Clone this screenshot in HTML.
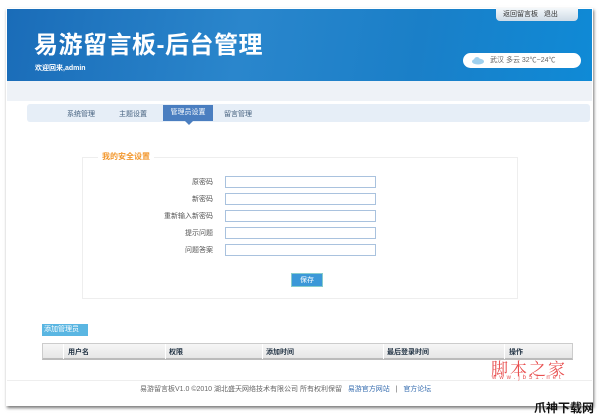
<!DOCTYPE html>
<html><head><meta charset="utf-8"><style>
*{margin:0;padding:0;box-sizing:border-box}
body{width:600px;height:412px;background:#fff;position:relative;overflow:hidden;font-family:"Liberation Sans","Noto Sans CJK SC",sans-serif;font-size:7px;color:#555}
.a{position:absolute}
.page{left:6px;top:8px;width:587px;height:398px;background:#fff;box-shadow:1px 2px 3px #777}
.hdr{left:7px;top:9px;width:585px;height:72px;background:linear-gradient(100deg,#1a6cb8 0%,#2a86cc 40%,#1a7fc8 70%,#0f8ad6 100%)}
.band{left:7px;top:81px;width:585px;height:20px;background:#eef2f7}
.title{left:34px;top:25px;font-size:24px;font-weight:bold;color:#fff;letter-spacing:0.5px}
.welcome{left:35px;top:63px;font-size:7px;font-weight:bold;color:#fff}
.topb{left:496px;top:8px;width:82px;height:13px;background:linear-gradient(#f4f8fb,#cfdbe6);border-radius:0 0 4px 4px;font-size:7px;color:#333;padding-left:7px;line-height:13px}
.wx{left:463px;top:53px;width:118px;height:15px;background:#fff;border-radius:8px;font-size:7px;color:#666;line-height:15px;padding-left:27px}
.nav{left:27px;top:104px;width:563px;height:18px;background:#e6eef7;border-radius:3px}
.tab{top:109px;font-size:7px;color:#44607e}
.act{left:163px;top:105px;width:50px;height:16px;background:#4a7ec0;color:#fff;text-align:center;line-height:16px;font-size:7px}
.arr{left:185px;top:121px;border:4px solid transparent;border-top-color:#4a7ec0;border-bottom:0}
.fs{left:82px;top:157px;width:436px;height:142px;border:1px solid #eee}
.lg{left:98px;top:151px;background:#fff;padding:0 4px;font-size:8px;font-weight:bold;color:#f2962b}
.lbl{width:120px;left:93px;text-align:right;font-size:7px;color:#555}
.inp{left:225px;width:151px;height:12px;border:1px solid #a9c2de}
.save{left:291px;top:273px;width:32px;height:14px;background:#3b98d8;color:#fff;font-size:7px;text-align:center;line-height:14px;border:1px solid #8cc}
.add{left:42px;top:324px;width:46px;height:12px;background:#5ab6e2;color:#fff;font-size:7px;line-height:12px;padding-left:2px}
.tbl{left:42px;top:343px;width:531px;height:17px;background:linear-gradient(#f6f6f6,#e6e6e6);border:1px solid #ccc;border-bottom:2px solid #bbb}
.th{top:347px;font-size:7px;font-weight:bold;color:#234}
.sep{top:344px;width:1px;height:15px;background:#fff}
.foot{left:7px;top:380px;width:585px;height:1px;background:#eee}
.ft{left:140px;top:384px;font-size:7px;color:#666}
.ft b{font-weight:normal;color:#3a6fb0}
</style></head><body>
<div class="a page"></div>
<div class="a hdr"></div>
<div class="a band"></div>
<div class="a title">易游留言板-后台管理</div>
<div class="a welcome">欢迎回来,admin</div>
<div class="a topb">返回留言板&nbsp;&nbsp;&nbsp;退出</div>
<div class="a wx">武汉 多云 32℃~24℃</div>
<svg class="a" style="left:471px;top:56px" width="14" height="9"><ellipse cx="7" cy="5.5" rx="6" ry="3" fill="#9fd0ee"/><circle cx="6" cy="4" r="3" fill="#9fd0ee"/></svg>
<div class="a nav"></div>
<div class="a tab" style="left:67px">系统管理</div>
<div class="a tab" style="left:119px">主题设置</div>
<div class="a act">管理员设置</div>
<div class="a arr"></div>
<div class="a tab" style="left:224px">留言管理</div>
<div class="a fs"></div>
<div class="a lg">我的安全设置</div>
<div class="a lbl" style="top:177px">原密码</div><div class="a inp" style="top:176px"></div>
<div class="a lbl" style="top:194px">新密码</div><div class="a inp" style="top:193px"></div>
<div class="a lbl" style="top:211px">重新输入新密码</div><div class="a inp" style="top:210px"></div>
<div class="a lbl" style="top:228px">提示问题</div><div class="a inp" style="top:227px"></div>
<div class="a lbl" style="top:245px">问题答案</div><div class="a inp" style="top:244px"></div>
<div class="a save">保存</div>
<div class="a add">添加管理员</div>
<div class="a tbl"></div>
<div class="a sep" style="left:63px"></div><div class="a sep" style="left:165px"></div><div class="a sep" style="left:262px"></div><div class="a sep" style="left:383px"></div><div class="a sep" style="left:504px"></div>
<div class="a th" style="left:68px">用户名</div>
<div class="a th" style="left:169px">权限</div>
<div class="a th" style="left:266px">添加时间</div>
<div class="a th" style="left:387px">最后登录时间</div>
<div class="a th" style="left:509px">操作</div>
<div class="a foot"></div>
<div class="a ft">易游留言板V1.0 ©2010 湖北盛天网络技术有限公司 所有权利保留&nbsp;&nbsp;&nbsp;<b>易游官方网站</b>&nbsp;&nbsp;&nbsp;|&nbsp;&nbsp;&nbsp;<b>官方论坛</b></div>
<div class="a" style="left:491px;top:355px;font-size:17px;color:#e85050;font-family:'Noto Serif CJK SC',serif;letter-spacing:2px">脚本之家</div>
<div class="a" style="left:492px;top:375px;font-size:6px;color:#e85050;letter-spacing:3px">www.jb51.net</div>
<div class="a" style="left:534px;top:399px;font-size:12px;font-weight:bold;color:#111">爪神下载网</div>
</body></html>
